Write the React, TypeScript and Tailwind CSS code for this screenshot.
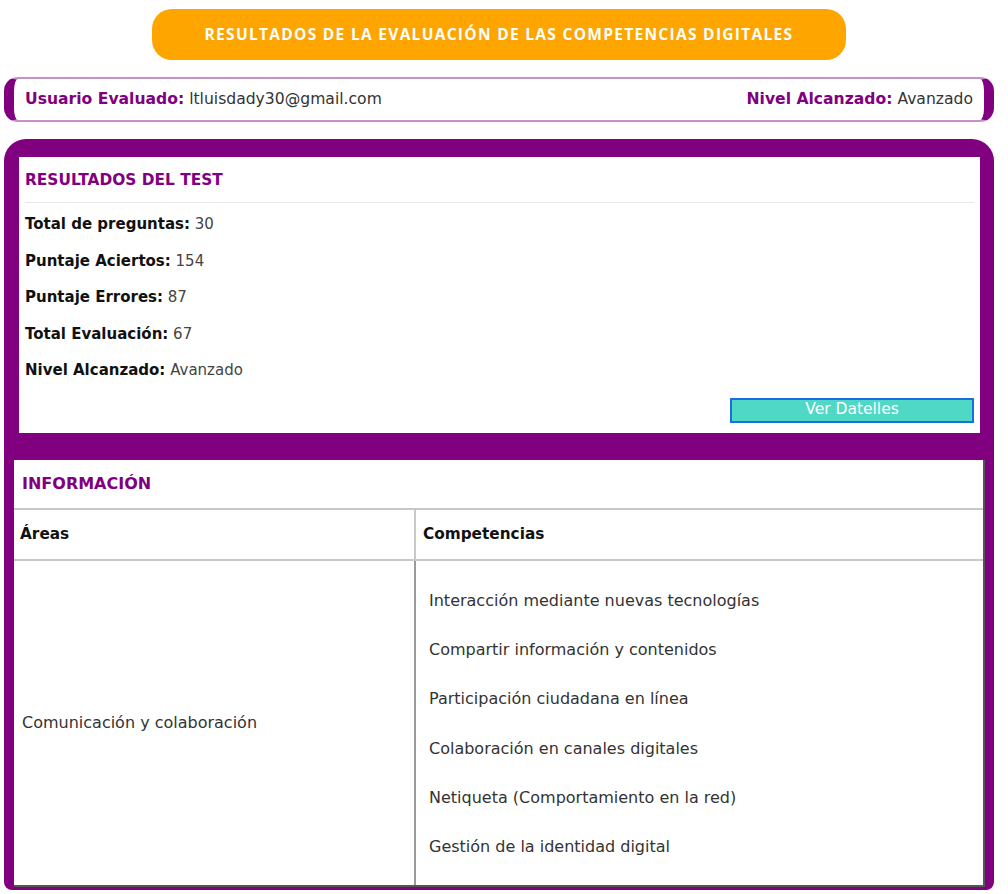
import React from "react";

const stats = [
  { label: "Total de preguntas:", value: "30" },
  { label: "Puntaje Aciertos:", value: "154" },
  { label: "Puntaje Errores:", value: "87" },
  { label: "Total Evaluación:", value: "67" },
  { label: "Nivel Alcanzado:", value: "Avanzado" },
];

const competencias = [
  "Interacción mediante nuevas tecnologías",
  "Compartir información y contenidos",
  "Participación ciudadana en línea",
  "Colaboración en canales digitales",
  "Netiqueta (Comportamiento en la red)",
  "Gestión de la identidad digital",
];

export default function App() {
  return (
    <div
      className="min-h-[894px] w-[1008px] bg-white text-[#333]"
      style={{ fontFamily: '"DejaVu Sans", "Noto Sans", sans-serif' }}
    >
      {/* Title */}
      <div className="flex w-[998px] justify-center pt-[9px]">
        <div className="flex h-[51px] w-[694px] items-center justify-center rounded-[20px] bg-[#ffa500]">
          <h1
            className="text-[15.5px] font-bold tracking-[1.3px] text-white"
            style={{ fontFamily: '"Open Sans", sans-serif' }}
          >
            RESULTADOS DE LA EVALUACIÓN DE LAS COMPETENCIAS DIGITALES
          </h1>
        </div>
      </div>

      {/* User bar */}
      <div className="mx-[4px] mt-[17px] flex h-[45px] w-[990px] items-center justify-between rounded-[14px] border-x-[10px] border-y-2 border-x-[#800080] border-y-[#c690c8] bg-white px-[11px] text-[15.6px]">
        <p>
          <span className="font-bold text-[#800080]">Usuario Evaluado:</span>{" "}
          <span className="text-[#333]">ltluisdady30@gmail.com</span>
        </p>
        <p>
          <span className="font-bold text-[#800080]">Nivel Alcanzado:</span>{" "}
          <span className="text-[#333]">Avanzado</span>
        </p>
      </div>

      {/* Main card */}
      <div className="mx-[4px] mt-[17px] w-[990px] rounded-t-[22px] rounded-b-[8px] bg-[#800080] pb-[3px] pt-[18px]">
        {/* Test results */}
        <div className="ml-[15px] mr-[14px] h-[276px] bg-white px-[6px] pt-[12px]">
          <h2 className="text-[15.4px] font-bold text-[#800080]">
            RESULTADOS DEL TEST
          </h2>
          <div className="mt-[10px] h-px bg-[#e8e8e8]" />
          <div className="mt-[11px] flex flex-col gap-[16px] text-[15px]">
            {stats.map((s) => (
              <p key={s.label} className="leading-[20.5px]">
                <span className="font-bold text-[#111]">{s.label}</span>{" "}
                <span className="text-[#444]">{s.value}</span>
              </p>
            ))}
          </div>
          <div className="mt-[17px] flex justify-end">
            <button className="h-[25px] w-[244px] border-2 border-[#1a6fe0] bg-[#4fd8c5] text-[15.5px] leading-none text-white">
              Ver Datelles
            </button>
          </div>
        </div>

        {/* Information table */}
        <div className="ml-[10px] mr-[9px] mt-[27px] border-r-2 border-b-2 border-[#555] bg-white">
          <div className="flex h-[50px] items-center border-b-2 border-[#c8c8c8] px-[8px]">
            <h2 className="text-[16px] font-bold text-[#800080]">INFORMACIÓN</h2>
          </div>
          <div className="grid grid-cols-[402px_1fr]">
            <div className="flex h-[51px] items-center border-b-2 border-r-2 border-[#c8c8c8] px-[6px] text-[15.3px] font-bold text-[#111]">
              Áreas
            </div>
            <div className="flex h-[51px] items-center border-b-2 border-[#c8c8c8] px-[7px] text-[15.3px] font-bold text-[#111]">
              Competencias
            </div>
            <div className="flex items-center border-r-2 border-[#9a9a9a] px-[8px] text-[16px] text-[#333]">
              Comunicación y colaboración
            </div>
            <div className="flex flex-col pb-[13px] pt-[15px] pl-[13px] text-[16px] text-[#333]">
              {competencias.map((c) => (
                <p key={c} className="flex h-[49.3px] items-center">
                  {c}
                </p>
              ))}
            </div>
          </div>
        </div>
      </div>
    </div>
  );
}
